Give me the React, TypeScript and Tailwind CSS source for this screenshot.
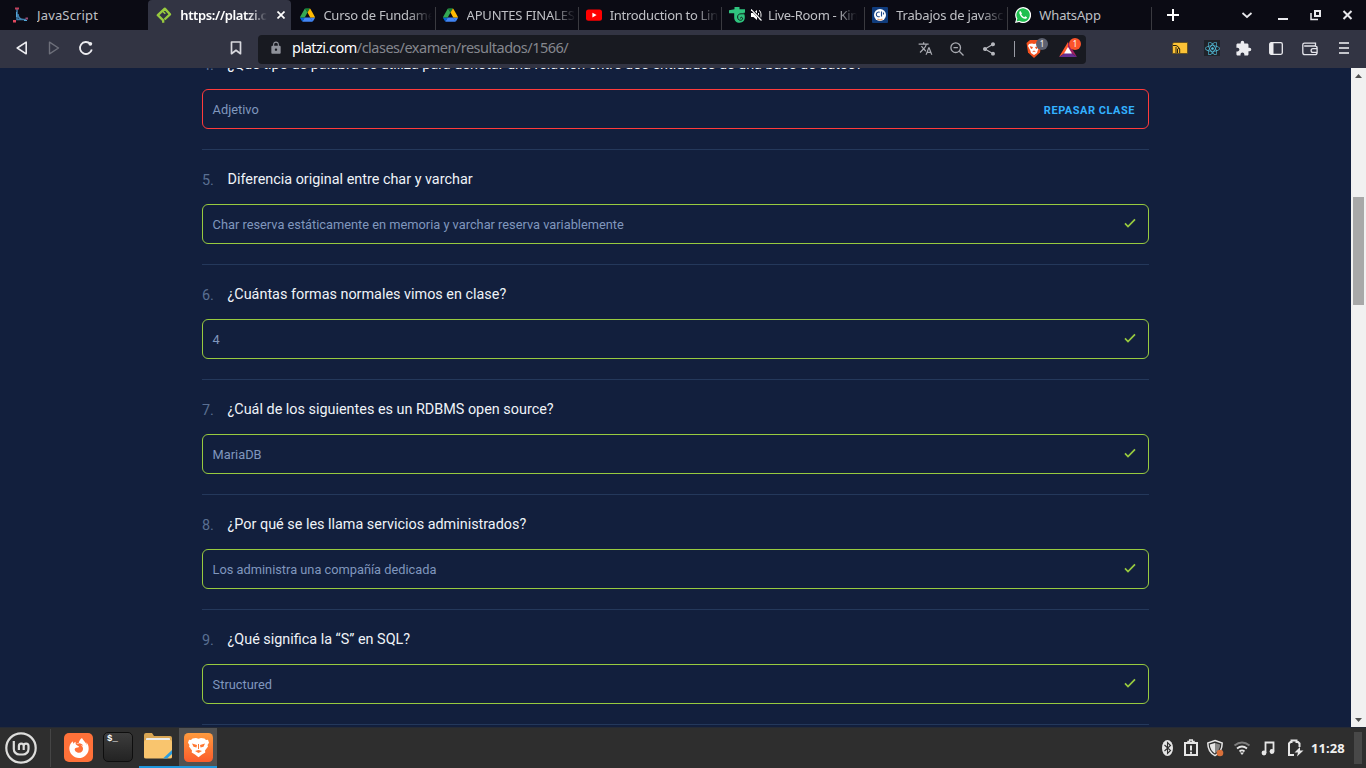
import React from "react";
import { FaReact } from "react-icons/fa6";
import { SiFirefoxbrowser } from "react-icons/si";
import { MdTranslate, MdShare, MdExtension, MdLock } from "react-icons/md";

const questions = [
  { n: 4, q: "¿Qué tipo de palabra se utiliza para denotar una relación entre dos entidades de una base de datos?", a: "Adjetivo", ok: false },
  { n: 5, q: "Diferencia original entre char y varchar", a: "Char reserva estáticamente en memoria y varchar reserva variablemente", ok: true },
  { n: 6, q: "¿Cuántas formas normales vimos en clase?", a: "4", ok: true },
  { n: 7, q: "¿Cuál de los siguientes es un RDBMS open source?", a: "MariaDB", ok: true },
  { n: 8, q: "¿Por qué se les llama servicios administrados?", a: "Los administra una compañía dedicada", ok: true },
  { n: 9, q: "¿Qué significa la “S” en SQL?", a: "Structured", ok: true },
];

function Drive() {
  return (
    <svg viewBox="0 0 87.3 78" className="w-[15px] h-[14px] shrink-0">
      <path d="m6.6 66.85 3.85 6.65c.8 1.4 1.95 2.5 3.3 3.3l13.75-23.8h-27.5c0 1.55.4 3.1 1.2 4.5z" fill="#0066da" />
      <path d="m43.65 25-13.75-23.8c-1.35.8-2.5 1.9-3.3 3.3l-25.4 44a9.06 9.06 0 0 0-1.2 4.5h27.5z" fill="#34a853" />
      <path d="m73.55 76.8c1.35-.8 2.5-1.9 3.3-3.3l1.6-2.75 7.65-13.25c.8-1.4 1.2-2.95 1.2-4.5h-27.502l5.852 11.5z" fill="#4285f4" />
      <path d="m43.65 25 13.75-23.8c-1.35-.8-2.9-1.2-4.5-1.2h-18.5c-1.6 0-3.15.45-4.5 1.2z" fill="#188038" />
      <path d="m59.8 53h-32.3l-13.75 23.8c1.35.8 2.9 1.2 4.5 1.2h50.8c1.6 0 3.15-.45 4.5-1.2z" fill="#4285f4" />
      <path d="m73.4 26.5-12.7-22c-.8-1.4-1.95-2.5-3.3-3.3l-13.75 23.8 16.15 28h27.45c0-1.55-.4-3.1-1.2-4.5z" fill="#ffba00" />
    </svg>
  );
}

function BranchIcon() {
  return (
    <svg viewBox="0 0 16 16" className="size-4">
      <path d="M4 2v10.5h9M5 7c0 3.500 2.500 5.500 6 5.500" fill="none" stroke="#3f7fae" strokeWidth="1.500" />
      <path d="M3.500 5v5M11 13.500h3" stroke="#54a5d6" strokeWidth="1" />
      <rect x="2" y="0.500" width="4" height="2" fill="#c2405a" />
      <rect x="0" y="13" width="3" height="2.500" fill="#e0485e" />
      <rect x="12.500" y="10.500" width="2.500" height="2" fill="#9c4a72" />
    </svg>
  );
}

function PlatziIcon() {
  return (
    <svg viewBox="0 0 16 16" className="size-4">
      <path d="M8.500 12.500 14 7.300 8.800 1.600 1.800 8.200 7.200 13.300V15.800" fill="none" stroke="#98ca3f" strokeWidth="2.300" strokeLinejoin="round" />
      <path d="M6 3.600 9.300 6.800" stroke="#98ca3f" strokeWidth="1.500" />
    </svg>
  );
}

function YoutubeIcon() {
  return (
    <svg viewBox="0 0 16 16" className="size-4">
      <rect y="2.400" width="16" height="11.400" rx="2.500" fill="#f00" />
      <path d="M6.400 5.700v4.800L10.600 8.100z" fill="#fff" />
    </svg>
  );
}

function LiveIcon() {
  return (
    <svg viewBox="0 0 16 16" className="size-4">
      <path d="M5.500 0h5v2.200H16v3.600h-1.500c.9 1 1.300 2.500 1.300 4.500 0 3.300-2 5.400-5.100 5.400-3.600 0-5.500-2-5.500-5.500V6.300H0V3.200l5.500-1z" fill="#2fc47e" />
      <path d="M16 6.800h-4c-2.200 0-3.400 1.200-3.400 3.200 0 2 1.200 3.300 2.900 3.300 1.500 0 2.400-1.200 2-2.300-.5-1.200-2.200-1-2 .4" fill="none" stroke="#10231f" strokeWidth="1" />
    </svg>
  );
}

function MuteIcon() {
  return (
    <svg viewBox="0 0 11 12" className="w-[11px] h-3 shrink-0">
      <path d="M0 4h2.500L6 1v10L2.500 8H0z" fill="#fff" />
      <path d="M7.500 4v4M8 1.300c2.700 1.300 2.700 8 0 9.400" fill="none" stroke="#fff" />
      <path d="m0 0 11 11.500" stroke="#0b0b14" strokeWidth="2.400" />
      <path d="m0 .5 10.500 11" stroke="#fff" strokeWidth="1.100" />
    </svg>
  );
}

function JobsIcon() {
  return (
    <svg viewBox="0 0 16 16" className="size-4">
      <rect width="16" height="16" rx="1" fill="#103c7c" />
      <circle cx="8" cy="8" r="6" fill="#fff" />
      <path d="M7.700 5.200a2.400 2.400 0 1 0 0 4.400M9.500 4.500v5M11.500 5.500v2" fill="none" stroke="#204a8a" strokeWidth="1.100" />
      <path d="M5.500 12c1.700 1.200 3.300 1.200 5 0" stroke="#e8a070" fill="none" strokeWidth="1.300" />
    </svg>
  );
}

function WhatsIcon() {
  return (
    <svg viewBox="0 0 16 16" className="size-4">
      <path d="M0 16 1.200 12A8 8 0 1 1 4.200 15z" fill="#fff" />
      <path d="M1.500 14.500 2.400 11.600A6.700 6.700 0 1 1 4.500 13.700z" fill="#1fc04f" />
      <path d="M5.500 4c-.9.300-1.400 1.200-1.100 2.400.7 2.600 2.900 4.800 5.500 5.300 1.100.2 2-.4 2.100-1.500L10.200 9.300l-.9 1C8 9.800 6.900 8.700 6.300 7.300l.7-.8z" fill="#fff" />
    </svg>
  );
}

const tabs: { t: string; icon: React.ReactNode; active?: boolean; muted?: boolean; cls: string }[] = [
  { t: "JavaScript", icon: <BranchIcon />, cls: "-ml-px tracking-[0.15px]" },
  { t: "https://platzi.com", icon: <PlatziIcon />, active: true, cls: "font-semibold text-white tracking-[-0.35px]" },
  { t: "Curso de Fundamentos", icon: <Drive />, cls: "tracking-[-0.25px]" },
  { t: "APUNTES FINALES", icon: <Drive />, cls: "tracking-[-0.2px]" },
  { t: "Introduction to Linux", icon: <YoutubeIcon />, cls: "tracking-[-0.3px]" },
  { t: "Live-Room - Kinal", icon: <LiveIcon />, muted: true, cls: "tracking-[-0.3px]" },
  { t: "Trabajos de javascript", icon: <JobsIcon />, cls: "tracking-[-0.2px]" },
  { t: "WhatsApp", icon: <WhatsIcon />, cls: "tracking-[-0.15px]" },
];

function TabStrip() {
  return (
    <div className="flex h-[30px] shrink-0 bg-[#0b0b14] pl-[5px]">
      {tabs.map((tab, i) => (
        <div
          key={tab.t}
          className={
            "relative flex h-[30px] w-[143.200px] shrink-0 items-center pl-2 " +
            (tab.active ? "rounded-t-[4px] bg-[#323443]" : "")
          }
        >
          <div className="flex w-4 shrink-0 justify-center">{tab.icon}</div>
          {tab.muted && <div className="ml-1.5"><MuteIcon /></div>}
          <div
            className={
              "overflow-hidden whitespace-nowrap text-[13px] leading-[20px] text-[#bfc0c5] " +
              (tab.active ? "ml-2 mr-[24px] w-[88px] " : tab.muted ? "ml-1.5 w-[89px] " : "ml-2 w-[109px] ") +
              (tab.t.length < 12 ? "" : "[mask-image:linear-gradient(to_right,#000_78%,transparent)] ") +
              tab.cls
            }
          >
            {tab.t}
          </div>
          {tab.active && (
            <svg viewBox="0 0 8 8" className="absolute left-[129px] top-[11px] size-2">
              <path d="m.5.500 7 7m0-7-7 7" stroke="#fff" strokeWidth="1.700" />
            </svg>
          )}
          {i > 1 && <div className="absolute -right-px top-[7px] h-[23px] w-px bg-[#3a3a40]" />}
        </div>
      ))}
      <svg viewBox="0 0 12 12" className="ml-[16px] mt-[9px] size-3 shrink-0">
        <path d="M6 0v12M0 6h12" stroke="#fff" strokeWidth="2" />
      </svg>
      <svg viewBox="0 0 112 12" className="ml-[62px] mt-[9px] h-3 w-[112px]" fill="none" stroke="#e8e8ec">
        <path d="m1.500 4 4.500 4 4.500-4" strokeWidth="1.700" />
        <path d="M37 10h10" strokeWidth="2" />
        <path d="M74 2h5v5h-5z" strokeWidth="2" />
        <path d="M70 4v6.500h7" strokeWidth="1.500" />
        <path d="m102.500 2 8 8m0-8-8 8" strokeWidth="2" />
      </svg>
    </div>
  );
}

function Toolbar() {
  return (
    <div className="flex h-[38px] shrink-0 items-center bg-[#323443]">
      <svg viewBox="0 0 12 14" className="ml-4 mt-[-2px] h-3.5 w-3" fill="none" stroke="#ececf0" strokeWidth="1.600" strokeLinejoin="round">
        <path d="M10.200 1.200v11.600L1.200 7z" />
      </svg>
      <svg viewBox="0 0 12 14" className="ml-5 mt-[-2px] h-3.5 w-3" fill="none" stroke="#6d6f7a" strokeWidth="1.400" strokeLinejoin="round">
        <path d="M1.500 1.200v11.600L10.500 7z" />
      </svg>
      <svg viewBox="0 0 16 16" className="ml-[18px] mt-[-2px] size-4" fill="none" stroke="#ececf0" strokeWidth="1.800">
        <path d="M12.300 3.800A6 6 0 1 0 13.800 9.500" />
        <circle cx="12.300" cy="3.800" r="1.900" fill="#ececf0" stroke="none" />
      </svg>
      <svg viewBox="0 0 12 14" className="ml-[136px] mt-[-2px] h-3.5 w-3" fill="none" stroke="#d8d8de" strokeWidth="1.700" strokeLinejoin="round">
        <path d="M1.500 1h9v11.700L6 9.300l-4.500 3.400z" />
      </svg>
      <div className="ml-4 flex h-[29px] w-[828px] items-center rounded-[4px] bg-[#181a21] pb-px pl-[11px]">
        <MdLock className="-mt-px size-3.5 shrink-0 text-[#8f929b]" />
        <div className="ml-[9px] w-[616px] -mt-[4px] whitespace-nowrap text-[14.500px] leading-5 tracking-[-0.500px] text-[#85878e]">
          <span className="text-white">platzi.com</span>/clases/examen/resultados/1566/
        </div>
        <MdTranslate className="ml-[10px] size-[15px] text-[#a9abb2]" />
        <svg viewBox="0 0 14 14" className="ml-[17px] size-3.5" fill="none" stroke="#a9abb2" strokeWidth="1.300">
          <circle cx="5.700" cy="5.700" r="4.800" />
          <path d="M3.500 5.700h4.400M9.300 9.300l4.200 4.200" />
        </svg>
        <MdShare className="ml-[17px] size-4 text-[#b5b7bd]" />
        <div className="ml-[17px] h-4 w-px bg-[#9a9ca5]" />
        <div className="relative ml-[11px] h-[18px] w-[16px]">
          <svg viewBox="0 0 16 18" className="h-[18px] w-4">
            <path d="M4 0h8l3.500 3-1.500 9.500L8 18l-6-5.500L.5 3z" fill="#f4511e" />
            <path d="m3 4 3-.5 2 .5 2-.5 3 .5 1 2-2.300 4.500L11 13l-3 2-3-2-.7-2.500L2 6z" fill="#fff" />
            <path d="m4 6.500 2.700.7L5.500 9zM12 6.500l-2.700.7L10.500 9zM6.500 11.800 8 10.800l1.500 1" fill="#f4511e" stroke="#f4511e" strokeWidth=".5" />
          </svg>
          <div className="absolute -top-[2px] left-[10px] flex size-3 items-center justify-center rounded-full bg-[#5d6170] text-[8px] text-white">1</div>
        </div>
        <div className="relative ml-[17px] h-4 w-[18px]">
          <svg viewBox="0 0 18 16" className="h-4 w-[18px]">
            <path d="M9 1 0 16l9-6z" fill="#ff5a2c" />
            <path d="M9 1v9l9 6z" fill="#9e1f63" />
            <path d="m0 16 9-6 9 6z" fill="#662d91" />
            <path d="m9 6-4 6.500h8z" fill="#fff" />
          </svg>
          <div className="absolute -top-[3px] left-[10px] flex size-3 items-center justify-center rounded-full bg-[#fb542b] text-[8px] text-white">1</div>
        </div>
      </div>
      <svg viewBox="0 0 16 12" className="ml-[86px] mt-[-2px] h-3 w-4">
        <path d="M.5 1.500 2 .5h13.500v11H.5z" fill="#fcc236" stroke="#5b4a1c" strokeWidth=".8" />
        <path d="M1 3.500h3q2.500.5 3.500 3.500M4 11V5M5.500 11V7q1-1 2.200 0v4" fill="none" stroke="#2a2310" strokeWidth="1" />
      </svg>
      <div className="ml-4 mt-[-2px] flex size-4 items-center justify-center bg-[#20232a]">
        <FaReact className="size-[15px] text-[#53c1de]" />
      </div>
      <MdExtension className="ml-[15px] mt-[-2px] size-[17px] text-[#ececf0]" />
      <svg viewBox="0 0 14 13" className="ml-[17px] mt-[-2px] h-[13px] w-3.5">
        <rect x=".7" y=".7" width="12.600" height="11.600" rx="1.500" fill="none" stroke="#ececf0" strokeWidth="1.300" />
        <path d="M1 1h3.500v11H1z" fill="#ececf0" />
      </svg>
      <svg viewBox="0 0 16 14" className="ml-[19px] h-3.5 w-4" fill="none" stroke="#e4e4ea" strokeWidth="1.300">
        <path d="M13.500 4V1.200H2.500C1.300 1.200.8 1.800.8 2.800v7.700c0 1.300.8 2.200 2.200 2.200h9.800c1.400 0 2.300-.8 2.300-2.200V6c0-1.300-.8-2-2.300-2H2.200M15 6.600h-4a1.900 1.900 0 0 0 0 3.800h4" />
      </svg>
      <svg viewBox="0 0 10 12" className="ml-[21px] mt-[-2px] h-3 w-2.5" stroke="#c4c5cb" strokeWidth="2">
        <path d="M0 1h10M0 6h10M0 11h10" />
      </svg>
    </div>
  );
}

function Content() {
  return (
    <div className="flex h-[659px] shrink-0 overflow-hidden bg-[#121f3d] font-['Roboto',sans-serif]">
      <div className="flex-1 overflow-hidden">
        <div className="mx-auto -mt-[33px] w-[947px]">
          {questions.map((x) => (
            <div key={x.n} className="h-[115px] border-b border-[#24385b]">
              <div className="flex h-[54px] items-start pt-5 leading-5">
                <div className="w-[25.500px] pt-px text-[14.400px] text-[#5a6f92]">{x.n}.</div>
                <div className="whitespace-nowrap text-[14.400px] text-[#eff3f8]">{x.q}</div>
              </div>
              <div
                className={
                  "flex h-10 items-center justify-between rounded-[6px] border pl-[9.600px] " +
                  (x.ok ? "border-[#98ca3f] pr-3" : "border-[#ff3b3b] pr-[13px]")
                }
              >
                <div className="pt-[2px] text-[12.800px] leading-5 text-[#8097bd]">{x.a}</div>
                {x.ok ? (
                  <svg viewBox="0 0 12 10" className="mt-[-2px] h-2.5 w-3" fill="none" stroke="#98ca3f" strokeWidth="1.700">
                    <path d="m1 5.300 3 3.200 7-7.200" />
                  </svg>
                ) : (
                  <div className="mt-[4px] text-[11px] font-bold tracking-[0.520px] text-[#33b1ff]">REPASAR CLASE</div>
                )}
              </div>
            </div>
          ))}
        </div>
      </div>
      <div className="flex w-[15px] flex-col items-center bg-[#f1f1f1] pt-[6px]">
        <svg viewBox="0 0 7 4" className="h-1 w-[7px]"><path d="M0 4 3.500 0 7 4z" fill="#505050" /></svg>
        <div className="mt-[119px] h-[108px] w-[11px] bg-[#a8a8a8]" />
        <svg viewBox="0 0 7 4" className="mb-[5px] mt-auto h-1 w-[7px]"><path d="m0 0 3.500 4L7 0z" fill="#505050" /></svg>
      </div>
    </div>
  );
}

function Taskbar() {
  return (
    <div className="flex h-[41px] shrink-0 items-stretch border-t border-[#252a35] bg-[#2e2e2e]">
      <div className="flex w-[50px] items-center pl-[5px]">
        <svg viewBox="0 0 32 32" className="size-8" fill="none" stroke="#dededc">
          <circle cx="16" cy="16" r="14.700" strokeWidth="2.200" />
          <path d="M8.800 9v8a5.500 5.500 0 0 0 5.500 5.500h3.700a5.500 5.500 0 0 0 5.500-5.500v-3a2.400 2.400 0 0 0-4.800 0v4m0-4a2.400 2.400 0 0 0-4.800 0v4" strokeWidth="2.200" />
        </svg>
      </div>
      <div className="my-px w-px bg-[#454545]" />
      <div className="flex w-[51px] items-start justify-end pr-[9px] pt-[5px]">
        <div className="flex size-[29px] items-center justify-center rounded-[5px] bg-[#ff7139]">
          <SiFirefoxbrowser className="size-5 text-white" />
        </div>
      </div>
      <div className="flex w-[37px] items-start pl-px pt-1">
        <div className="h-[30px] w-[30px] rounded-[5px] border border-[#0e0e0e] bg-linear-to-b from-[#3d3d3d] to-[#232323] pl-[3px] pt-px font-['Liberation_Mono',monospace] text-[9px] font-bold leading-[11px] text-white">$_</div>
      </div>
      <div className="flex w-[40px] flex-col items-center justify-between border-b-2 border-[#1e97de] pt-[5px]">
        <svg viewBox="0 0 28 27" className="-ml-[2px] h-[27px] w-7">
          <path d="M0 2q0-2 2-2h6l2 3h16q2 0 2 2v18q0 2-2 2H2q-2 0-2-2z" fill="#d9a654" />
          <rect x="2" y="5" width="24" height="6" rx="1" fill="#ececec" />
          <path d="M0 9q0-2 2-2h24q2 0 2 2v15q0 1.500-2 1.500H2q-2 0-2-1.500z" fill="#f9c56e" />
          <path d="M28 17v4l-5 4.500h-4z" fill="#2a9de0" />
        </svg>
      </div>
      <div className="flex w-[38px] items-start justify-center border-b-2 border-[#1e97de] bg-[#515151] pt-[5px]">
        <svg viewBox="0 0 29 29" className="size-[29px]">
          <defs>
            <linearGradient id="lion" x1="0" y1="0" x2="0" y2="1"><stop stopColor="#ff9b3e" /><stop offset="1" stopColor="#fb5c2b" /></linearGradient>
          </defs>
          <rect width="29" height="29" rx="4.500" fill="url(#lion)" />
          <path d="m8.500 5.500 3.500-.5 2.500.7L17 5l3.500.5L22 7l2-.3 1 3-1.500 2.300.5 1.500-3 4 .3 2-3.300 2-3.500 2.700L11 21.500l-3.300-2 .3-2-3-4 .5-1.500L4 9.700l1-3L7 7z" fill="#fff" />
          <path d="M8 10.500 13 12l-.5 2.500-3-.8zM21 10.500 16 12l.5 2.500 3-.8zM11 18l3.500-1 3.500 1-3.500 2zM14 11h1v5h-1z" fill="#ff7833" />
        </svg>
      </div>
      <div className="ml-auto flex items-center pr-1">
        <svg viewBox="0 0 142 18" className="-mt-px h-[18px] w-[142px]" fill="none">
          <ellipse cx="5.500" cy="9" rx="5.500" ry="8" fill="#e6e6e6" />
          <path d="m2.500 6 6 5.500L5.500 14.500v-11L8.500 6.500l-6 5.500" stroke="#2e2e2e" strokeWidth="1.100" />
          <path d="M23 4h12v12H23z" stroke="#e6e6e6" strokeWidth="2" />
          <path d="M26 4V2.500h1.700V1h2.600v1.500H32V4" stroke="#e6e6e6" strokeWidth="1.500" />
          <path d="M29 6.500v5m0 1.300v2" stroke="#e6e6e6" strokeWidth="2" />
          <path d="M53 1.500 60.200 4q0 9-7.200 12.700Q45.800 13 45.800 4z" stroke="#e6e6e6" strokeWidth="1.500" />
          <path d="M53 4v10.500Q48 11 47.800 5.500z" fill="#e6e6e6" />
          <path d="M53 4v10.500q5-3.500 5.200-9z" fill="#868686" />
          <circle cx="58" cy="14" r="3.300" fill="#d8703a" />
          <path d="M72.500 6.500q7.500-6 15 0" stroke="#7d7d7d" strokeWidth="2" />
          <path d="M75 9.500q5-4 10 0M77.500 12.500q2.500-2.200 5 0" stroke="#e6e6e6" strokeWidth="1.800" />
          <path d="m78 13.500 2 2.500 2-2.500z" fill="#e6e6e6" />
          <path d="M103.500 14V3.500h8V12" stroke="#e6e6e6" strokeWidth="1.800" />
          <circle cx="102" cy="14" r="2.400" fill="#e6e6e6" />
          <circle cx="110" cy="12.500" r="2.400" fill="#e6e6e6" />
          <path d="M132 16h-5V4.500L128.500 3h1V1.500h5V3h1.500l1.500 1.500V8" stroke="#e6e6e6" strokeWidth="2" />
          <path d="m138 8-5.500 5.500h3.500l-1 4 6.500-6H138z" fill="#e6e6e6" />
        </svg>
        <div className="ml-[7px] mr-[9px] w-[34px] whitespace-nowrap text-[13px] font-bold leading-5 tracking-[0.1px] text-[#f0f0f0]">11:28</div>
        <div className="h-8 w-2 bg-[#484848]" />
      </div>
    </div>
  );
}

export default function App() {
  return (
    <div className="flex h-[768px] w-[1366px] flex-col overflow-hidden bg-[#121f3d] font-['Noto_Sans','Open_Sans',sans-serif]">
      <TabStrip />
      <Toolbar />
      <Content />
      <Taskbar />
    </div>
  );
}
